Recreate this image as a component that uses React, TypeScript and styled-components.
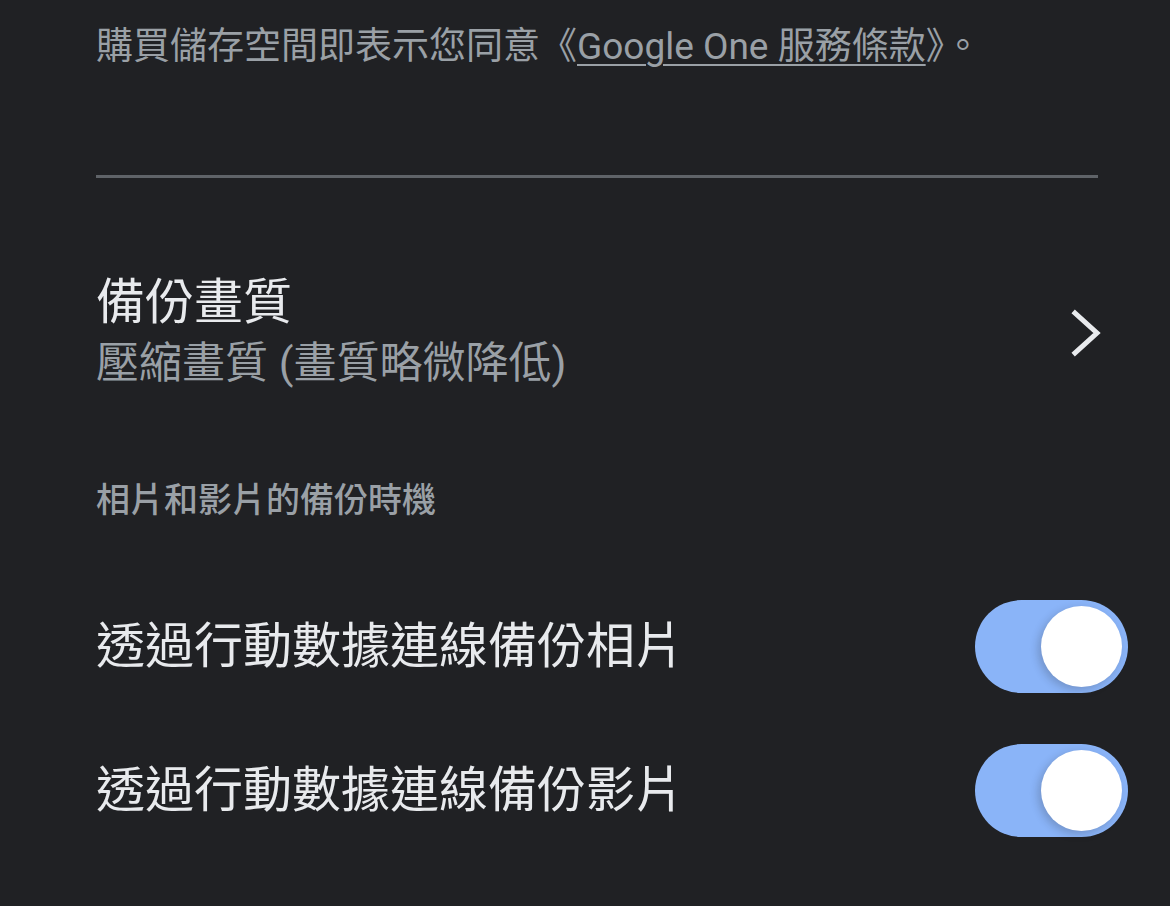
import React from "react";
import styled, { createGlobalStyle } from "styled-components";

const Global = createGlobalStyle`
  html, body {
    margin: 0;
    padding: 0;
    background: #202124;
  }
  body {
    font-family: Roboto, "Noto Sans CJK TC", "Noto Sans", sans-serif;
    -webkit-font-smoothing: antialiased;
  }
`;

const Page = styled.div`
  width: 1170px;
  height: 906px;
  box-sizing: border-box;
  background: #202124;
  padding: 20px 72px 0 96px;
  overflow: hidden;
  display: flex;
  flex-direction: column;
`;

const Terms = styled.p`
  margin: 0;
  font-size: 37px;
  line-height: 54px;
  color: #9aa0a6;
  white-space: nowrap;
`;

const TermsLink = styled.a`
  color: #9aa0a6;
  text-decoration: underline;
  text-underline-offset: 5px;
  text-decoration-thickness: 2px;
`;

const Divider = styled.hr`
  margin: 101px 0 0;
  border: none;
  height: 3px;
  background: #5f6368;
`;

const NavRow = styled.div`
  margin-top: 95px;
  display: flex;
  align-items: center;
  justify-content: space-between;
`;

const TextCol = styled.div`
  display: flex;
  flex-direction: column;
`;

const Title = styled.div`
  font-size: 49px;
  line-height: 60px;
  color: #e8eaed;
`;

const Subtitle = styled.div`
  font-size: 43px;
  line-height: 60px;
  color: #9aa0a6;
`;

const Chevron = styled.svg`
  width: 30px;
  height: 48px;
  margin-right: -3px;
  flex: none;
`;

const SectionHeader = styled.div`
  margin-top: 83px;
  font-size: 34px;
  line-height: 48px;
  font-weight: 500;
  color: #9aa0a6;
`;

const ToggleRow = styled.div<{ $gap: number }>`
  margin-top: ${(p) => p.$gap}px;
  display: flex;
  align-items: center;
  justify-content: space-between;
`;

const RowLabel = styled.div`
  font-size: 49px;
  line-height: 60px;
  color: #e8eaed;
  white-space: nowrap;
`;

const Track = styled.div<{ $on: boolean }>`
  position: relative;
  width: 153px;
  height: 93px;
  border-radius: 47px;
  background: ${(p) => (p.$on ? "#8ab4f8" : "#5f6368")};
  margin-right: -30px;
  flex: none;
`;

const Knob = styled.div<{ $on: boolean }>`
  position: absolute;
  top: 6px;
  ${(p) => (p.$on ? "right: 6px;" : "left: 6px;")}
  width: 81px;
  height: 81px;
  border-radius: 50%;
  background: #ffffff;
  box-shadow: -3px 3px 8px rgba(32, 33, 36, 0.22);
`;

const Toggle = ({ on }: { on: boolean }) => (
  <Track $on={on}>
    <Knob $on={on} />
  </Track>
);

export default function App() {
  return (
    <>
      <Global />
      <Page>
        <Terms>
          購買儲存空間即表示您同意《<TermsLink>Google One 服務條款</TermsLink>》。
        </Terms>
        <Divider />
        <NavRow>
          <TextCol>
            <Title>備份畫質</Title>
            <Subtitle>壓縮畫質 (畫質略微降低)</Subtitle>
          </TextCol>
          <Chevron viewBox="0 0 30 48">
            <path
              d="M4 4 L26 24 L4 44"
              fill="none"
              stroke="#e8eaed"
              strokeWidth="5"
              strokeLinecap="square"
              strokeLinejoin="miter"
            />
          </Chevron>
        </NavRow>
        <SectionHeader>相片和影片的備份時機</SectionHeader>
        <ToggleRow $gap={76}>
          <RowLabel>透過行動數據連線備份相片</RowLabel>
          <Toggle on />
        </ToggleRow>
        <ToggleRow $gap={51}>
          <RowLabel>透過行動數據連線備份影片</RowLabel>
          <Toggle on />
        </ToggleRow>
      </Page>
    </>
  );
}
